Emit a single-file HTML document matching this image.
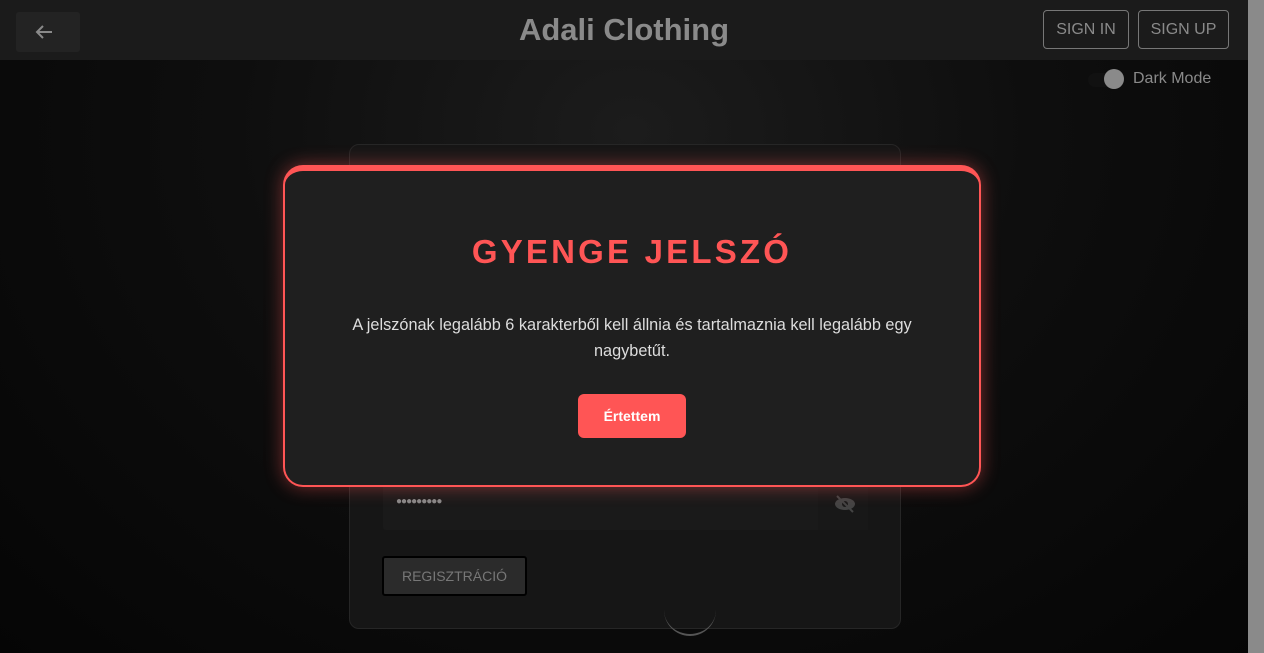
<!DOCTYPE html>
<html><head><meta charset="utf-8"><style>
*{box-sizing:border-box;margin:0;padding:0}
body{width:1264px;height:653px;overflow:hidden;font-family:"Liberation Sans",sans-serif;background:radial-gradient(ellipse at 50% 20%,#1c1c1c 0%,#0e0e0e 45%,#050505 100%);position:relative}
.sb{position:absolute;right:0;top:0;width:16px;height:653px;background:#8a8a8a}
.top{position:absolute;left:0;top:0;width:1248px;height:60px;background:#1b1b1b}
.back{position:absolute;left:16px;top:12px;width:64px;height:40px;background:#232323;border-radius:3px}
.title{position:absolute;left:0;width:1248px;top:12px;text-align:center;font-size:31px;font-weight:bold;color:#8a8a8a}
.btn{position:absolute;top:10px;height:39px;border:1px solid #777;border-radius:4px;color:#8a8a8a;font-size:16px;line-height:37px;text-align:center}
.dm{position:absolute;left:1133px;top:70px;color:#8a8a8a;font-size:16px}
.tog{position:absolute;left:1088px;top:73px;width:34px;height:14px;border-radius:7px;background:#111}
.knob{position:absolute;left:1104px;top:69px;width:20px;height:20px;border-radius:50%;background:#8a8a8a}
.card{position:absolute;left:349px;top:144px;width:552px;height:485px;background:#161616;border:1px solid #262626;border-radius:10px}
.inp{position:absolute;left:383px;top:480px;width:485px;height:50px;background:#1a1a1a;border-radius:3px}
.eyebox{position:absolute;left:818px;top:480px;width:50px;height:50px;background:#181818}
.reg{position:absolute;left:382px;top:556px;width:145px;height:40px;background:#2b2b2b;border:2px solid #000;border-radius:3px;color:#777;font-size:14px;line-height:36px;text-align:center}
.modal{position:absolute;left:283px;top:165px;width:698px;height:322px;background:#1f1f1f;border:2px solid #ff5555;border-top:6px solid #ff5555;border-radius:20px;box-shadow:0 0 18px rgba(255,85,85,.45)}
.mt{position:absolute;left:0;width:100%;top:62px;text-align:center;color:#ff5555;font-size:33px;font-weight:bold;letter-spacing:3.2px}
.mp{position:absolute;left:20px;right:20px;top:141px;text-align:center;color:#ddd;font-size:16.3px;line-height:26px}
.mb{position:absolute;left:293px;top:223px;width:108px;height:44px;background:#ff5555;border-radius:6px;color:#fff;font-weight:bold;font-size:14px;line-height:44px;text-align:center}
</style></head><body>
<div class="top"></div>
<div class="back"><svg width="64" height="40"><path d="M36 20H21M27 14l-6 6 6 6" stroke="#8a8a8a" stroke-width="2" fill="none"/></svg></div>
<div class="title">Adali Clothing</div>
<div class="btn" style="left:1043px;width:86px">SIGN IN</div>
<div class="btn" style="left:1138px;width:91px">SIGN UP</div>
<div class="tog"></div><div class="knob"></div>
<div class="dm">Dark Mode</div>
<div class="card"></div>
<div style="position:absolute;left:664px;top:606px;width:52px;height:30px;border-bottom:2px solid #555;border-radius:0 0 26px 26px"></div>
<div class="inp"></div><div class="eyebox"><svg width="50" height="50"><ellipse cx="27" cy="24" rx="10" ry="6" fill="#444"/><circle cx="27" cy="24" r="3" fill="#1a1a1a"/><path d="M19 16l16 16" stroke="#444" stroke-width="2"/></svg></div>
<div style="position:absolute;left:396px;top:496px;color:#888;font-size:10px;letter-spacing:-1px">●●●●●●●●●</div>
<div class="reg">REGISZTRÁCIÓ</div>
<div class="modal">
<div class="mt">GYENGE JELSZÓ</div>
<div class="mp">A jelszónak legalább 6 karakterből kell állnia és tartalmaznia kell legalább egy<br>nagybetűt.</div>
<div class="mb">Értettem</div>
</div>
<div class="sb"></div>
</body></html>
